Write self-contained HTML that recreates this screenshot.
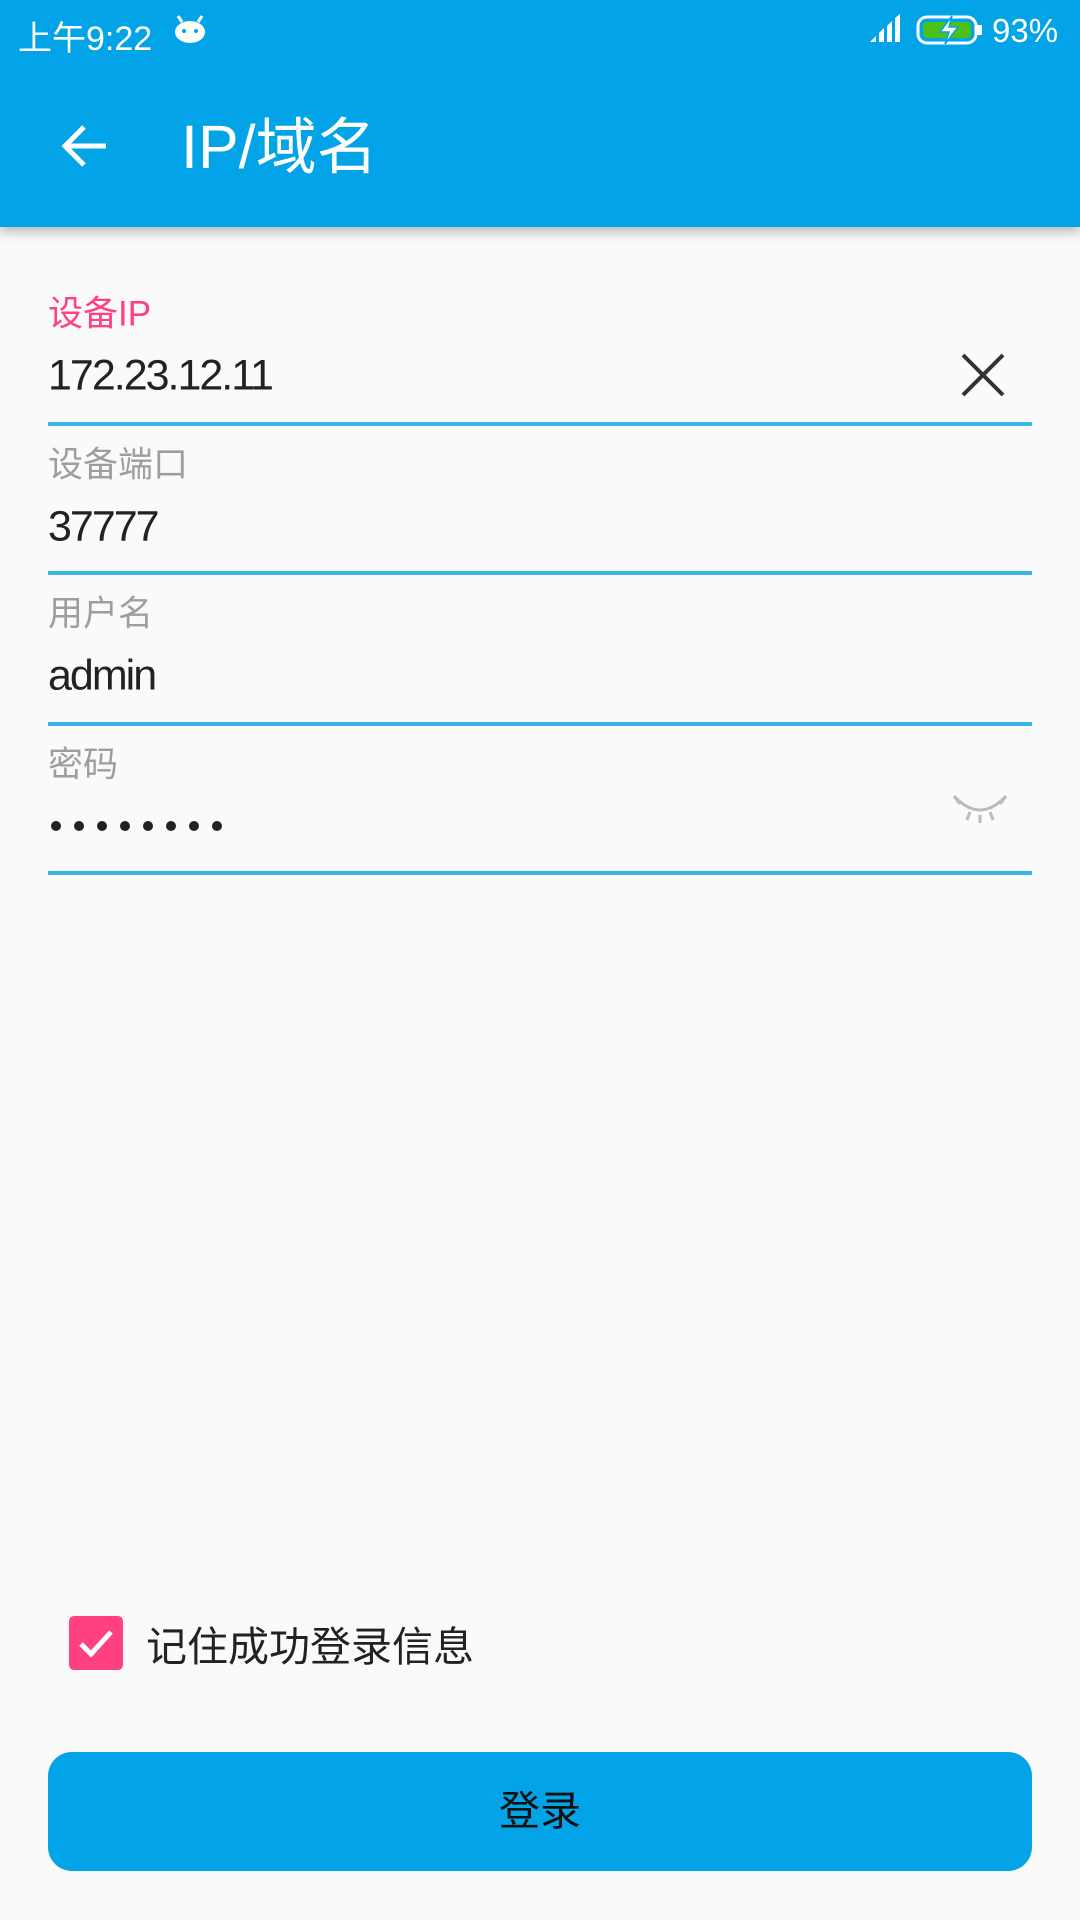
<!DOCTYPE html>
<html><head><meta charset="utf-8"><style>
*{margin:0;padding:0;box-sizing:border-box}
body{width:1080px;height:1920px;background:#fafafa;font-family:"Liberation Sans","Noto Sans CJK SC",sans-serif;position:relative;overflow:hidden}
.bar{position:absolute;left:0;top:0;width:1080px;height:227px;background:#02a4e7;box-shadow:0 4px 12px rgba(0,0,0,.3)}
.abs{position:absolute;white-space:nowrap}
.lbl{font-size:35px;color:#9e9e9e;transform:translateY(-50%)}
.val{font-size:43px;color:#222;transform:translateY(-50%);letter-spacing:-2px}
.line{position:absolute;left:48px;width:984px;height:4px;background:#37b5e6}
</style></head><body>
<div class="bar"></div>
<div class="abs" style="left:18px;top:11px;font-size:34px;color:#fff">上午9:22</div>
<svg class="abs" style="left:172px;top:14px" width="36" height="30" viewBox="0 0 36 30"><path d="M6 2l4 6M30 2l-4 6" stroke="#fff" stroke-width="3"/><ellipse cx="18" cy="18" rx="15" ry="11" fill="#fff"/><circle cx="12" cy="17" r="2" fill="#02a4e7"/><circle cx="24" cy="17" r="2" fill="#02a4e7"/></svg>
<svg class="abs" style="left:868px;top:14px" width="36" height="30"><path d="M2 28h6v-6zM11 28h5V14l-5 5zM19 28h5V7l-5 5zM27 28h5V0l-5 4z" fill="#fff"/></svg>
<svg class="abs" style="left:916px;top:14px" width="68" height="32"><rect x="2" y="3" width="58" height="26" rx="9" fill="none" stroke="#fff" stroke-width="3"/><rect x="7" y="8" width="48" height="16" rx="4" fill="#4cc11a"/><rect x="61" y="11" width="5" height="10" fill="#fff"/><path d="M36 2L24 18h9l-4 12 13-17h-9z" fill="#fff" stroke="#02a4e7" stroke-width="1.5"/></svg>
<div class="abs" style="left:992px;top:12px;font-size:33px;color:#fff">93%</div>
<svg class="abs" style="left:58px;top:122px" width="52" height="48" viewBox="0 0 52 48"><path d="M48 24H8M26 5L7 24l19 19" fill="none" stroke="#fff" stroke-width="5"/></svg>
<div class="abs" style="left:181px;top:110px;font-size:61px;color:#fff;line-height:74px">IP/域名</div>

<div class="abs lbl" style="left:48px;top:311px;color:#ff4081">设备IP</div>
<div class="abs val" style="left:48px;top:376px">172.23.12.11</div>
<svg class="abs" style="left:960px;top:352px" width="46" height="46"><path d="M3 3L43 43M43 3L3 43" stroke="#333" stroke-width="4"/></svg>
<div class="line" style="top:422px"></div>

<div class="abs lbl" style="left:48px;top:462px">设备端口</div>
<div class="abs val" style="left:48px;top:527px">37777</div>
<div class="line" style="top:571px"></div>

<div class="abs lbl" style="left:48px;top:611px">用户名</div>
<div class="abs val" style="left:48px;top:676px">admin</div>
<div class="line" style="top:722px"></div>

<div class="abs lbl" style="left:48px;top:762px">密码</div>
<svg class="abs" style="left:50px;top:816px" width="180" height="20"><g fill="#222"><circle cx="6" cy="10" r="5"/><circle cx="29" cy="10" r="5"/><circle cx="52" cy="10" r="5"/><circle cx="75" cy="10" r="5"/><circle cx="98" cy="10" r="5"/><circle cx="121" cy="10" r="5"/><circle cx="144" cy="10" r="5"/><circle cx="167" cy="10" r="5"/></g></svg>
<svg class="abs" style="left:950px;top:790px" width="60" height="40"><path d="M4 6Q30 34 56 6M4 6l6 8M56 6l-6 8M20 22l-3 8M40 22l3 8M30 25v8" fill="none" stroke="#bbb" stroke-width="3"/></svg>
<div class="line" style="top:871px"></div>

<div class="abs" style="left:69px;top:1616px;width:54px;height:54px;background:#ff4081;border-radius:5px"></div>
<svg class="abs" style="left:69px;top:1616px" width="54" height="54"><path d="M12 28l10 10 20-22" fill="none" stroke="#fff" stroke-width="5"/></svg>
<div class="abs" style="left:146px;top:1643px;font-size:41px;color:#222;transform:translateY(-50%)">记住成功登录信息</div>

<div class="abs" style="left:48px;top:1752px;width:984px;height:119px;background:#02a4e7;border-radius:24px;text-align:center;line-height:119px;font-size:41px;color:#111">登录</div>
</body></html>
